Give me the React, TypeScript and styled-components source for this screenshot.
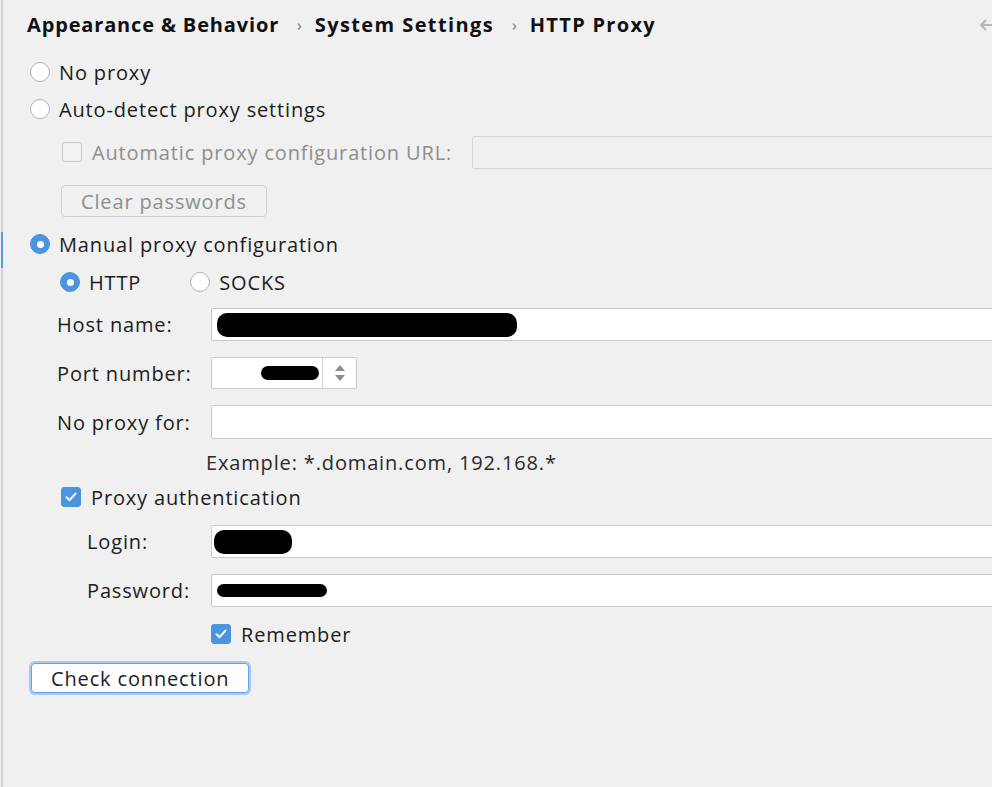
import React from "react";
import styled, { createGlobalStyle } from "styled-components";

const Global = createGlobalStyle`
  html, body { margin: 0; padding: 0; background: #f0f0f0; overflow: hidden; }
  body { font-family: "Open Sans", "Noto Sans", sans-serif; color: #1c1c1c; }
  * { box-sizing: border-box; }
`;

const Page = styled.div`
  display: flex;
  width: 992px;
  height: 787px;
  background: #f0f0f0;
  font-size: 20px;
  letter-spacing: 0.85px;
`;

const Rail = styled.div`
  width: 2px;
  margin-left: 1px;
  background: #d2d2d2;
  display: flex;
  flex-direction: column;
`;

const RailMark = styled.div`
  margin-top: 232px;
  height: 36px;
  background: #5b9be0;
`;

const Content = styled.div`
  flex: 1;
  display: flex;
  flex-direction: column;
  padding-left: 24px;
  min-width: 0;
`;

const Header = styled.div`
  height: 49px;
  display: flex;
  align-items: center;
  justify-content: space-between;
  font-weight: 700;
  letter-spacing: 0.85px;
  color: #111;
`;

const Crumbs = styled.div`
  display: flex;
  align-items: center;
`;

const Crumb = styled.span<{ $ls?: number }>`
  letter-spacing: ${(p) => p.$ls ?? 0.85}px;
`;

const Sep = styled.span`
  color: #777;
  font-weight: 400;
  font-size: 16px;
  margin: 0 12px 0 18px;
`;

const BackArrow = styled.svg`
  margin-right: -6px;
  flex: none;
`;

const Row = styled.div<{ $mt: number; $h: number; $indent?: number }>`
  display: flex;
  align-items: center;
  margin-top: ${(p) => p.$mt}px;
  height: ${(p) => p.$h}px;
  padding-left: ${(p) => p.$indent ?? 0}px;
`;

const Choice = styled.label<{ $disabled?: boolean }>`
  display: inline-flex;
  align-items: center;
  color: ${(p) => (p.$disabled ? "#8e8e8e" : "#1c1c1c")};
  white-space: nowrap;
`;

const RadioDot = styled.span<{ $on?: boolean }>`
  width: 20px;
  height: 20px;
  border-radius: 50%;
  flex: none;
  margin-right: 9px;
  display: inline-flex;
  align-items: center;
  justify-content: center;
  background: ${(p) => (p.$on ? "#4a94e0" : "#ffffff")};
  border: 1px solid ${(p) => (p.$on ? "#4a94e0" : "#b3b3b3")};
  &::after {
    content: "";
    display: ${(p) => (p.$on ? "block" : "none")};
    width: 7px;
    height: 7px;
    border-radius: 50%;
    background: #fff;
  }
`;

const Box = styled.span<{ $on?: boolean; $disabled?: boolean }>`
  width: 20px;
  height: 20px;
  border-radius: 3px;
  flex: none;
  margin-right: 10px;
  display: inline-flex;
  align-items: center;
  justify-content: center;
  background: ${(p) => (p.$on ? "#4a94e0" : p.$disabled ? "#f2f2f2" : "#fff")};
  border: 1px solid ${(p) => (p.$on ? "#4a94e0" : p.$disabled ? "#c6c6c6" : "#b3b3b3")};
`;

const Spacer = styled.span<{ $w: number }>`
  display: inline-block;
  width: ${(p) => p.$w}px;
  flex: none;
`;

const Field = styled.div<{ $disabled?: boolean; $h?: number }>`
  flex: 1;
  height: ${(p) => p.$h ?? 33}px;
  margin-right: -6px;
  display: flex;
  align-items: center;
  padding-left: 5px;
  background: ${(p) => (p.$disabled ? "#f0f0f0" : "#ffffff")};
  border: 1px solid ${(p) => (p.$disabled ? "#d6d6d6" : "#c9c9c9")};
  border-radius: 2px;
`;

const Label = styled.span<{ $w: number }>`
  width: ${(p) => p.$w}px;
  flex: none;
  white-space: nowrap;
`;

const Redact = styled.span<{ $w: number; $h: number; $ml?: number }>`
  display: inline-block;
  width: ${(p) => p.$w}px;
  height: ${(p) => p.$h}px;
  margin-left: ${(p) => p.$ml ?? 0}px;
  background: #000;
  border-radius: ${(p) => Math.min(p.$h / 2, 10)}px;
`;

const Spinner = styled.div`
  width: 146px;
  height: 32px;
  display: flex;
  background: #fff;
  border: 1px solid #c9c9c9;
  border-radius: 2px;
`;

const SpinValue = styled.div`
  flex: 1;
  display: flex;
  align-items: center;
  justify-content: flex-end;
  padding-right: 3px;
  border-right: 1px solid #d4d4d4;
`;

const SpinArrows = styled.div`
  width: 33px;
  display: flex;
  align-items: center;
  justify-content: center;
`;

const Button = styled.button<{ $disabled?: boolean; $focus?: boolean }>`
  font: inherit;
  letter-spacing: inherit;
  font-size: 20px;
  height: ${(p) => (p.$focus ? 30 : 32)}px;
  padding: 0 19px;
  margin-left: ${(p) => (p.$focus ? 2 : 0)}px;
  border-radius: 4px;
  background: ${(p) => (p.$disabled ? "#f0f0f0" : "#ffffff")};
  color: ${(p) => (p.$disabled ? "#8e8e8e" : "#1c1c1c")};
  border: 1px solid ${(p) => (p.$disabled ? "#cfcfcf" : "#6aa5e8")};
  box-shadow: ${(p) => (p.$focus ? "0 0 0 2px #a6cbf2" : "none")};
  display: inline-flex;
  align-items: center;
`;

const Hint = styled.span`
  padding-left: 179px;
  color: #2a2a2a;
`;

const Check = () => (
  <svg width="12" height="10" viewBox="0 0 12 10">
    <path d="M1.5 5.2 L4.6 8.2 L10.5 1.6" fill="none" stroke="#fff" strokeWidth="2" strokeLinecap="round" strokeLinejoin="round" />
  </svg>
);

export default function App() {
  return (
    <>
      <Global />
      <Page>
        <Rail>
          <RailMark />
        </Rail>
        <Content>
          <Header>
            <Crumbs>
              <Crumb>Appearance &amp; Behavior</Crumb>
              <Sep>›</Sep>
              <Crumb $ls={1.4}>System Settings</Crumb>
              <Sep>›</Sep>
              <Crumb $ls={1.3}>HTTP Proxy</Crumb>
            </Crumbs>
            <BackArrow width="20" height="14" viewBox="0 0 20 14">
              <path d="M19 7 H3 M8 2 L3 7 L8 12" fill="none" stroke="#b5b5b5" strokeWidth="2" />
            </BackArrow>
          </Header>

          <Row $mt={5} $h={36} $indent={3}>
            <Choice>
              <RadioDot />
              No proxy
            </Choice>
          </Row>
          <Row $mt={1} $h={36} $indent={3}>
            <Choice>
              <RadioDot />
              Auto-detect proxy settings
            </Choice>
          </Row>
          <Row $mt={7} $h={36} $indent={35}>
            <Choice $disabled>
              <Box $disabled />
              Automatic proxy configuration URL:
            </Choice>
            <Spacer $w={20} />
            <Field $disabled />
          </Row>
          <Row $mt={15} $h={32} $indent={34}>
            <Button $disabled>Clear passwords</Button>
          </Row>
          <Row $mt={9} $h={36} $indent={3}>
            <Choice>
              <RadioDot $on />
              Manual proxy configuration
            </Choice>
          </Row>
          <Row $mt={2} $h={36} $indent={33}>
            <Choice>
              <RadioDot $on />
              HTTP
            </Choice>
            <Spacer $w={49} />
            <Choice>
              <RadioDot />
              SOCKS
            </Choice>
          </Row>

          <Row $mt={8} $h={33} $indent={30}>
            <Label $w={154}>Host name:</Label>
            <Field>
              <Redact $w={300} $h={24} />
            </Field>
          </Row>
          <Row $mt={16} $h={32} $indent={30}>
            <Label $w={154}>Port number:</Label>
            <Spinner>
              <SpinValue>
                <Redact $w={58} $h={14} />
              </SpinValue>
              <SpinArrows>
                <svg width="12" height="22" viewBox="0 0 12 22">
                  <path d="M1 9 L6 3 L11 9 Z M1 13 L6 19 L11 13 Z" fill="#8c8c8c" />
                </svg>
              </SpinArrows>
            </Spinner>
          </Row>
          <Row $mt={16} $h={34} $indent={30}>
            <Label $w={154}>No proxy for:</Label>
            <Field $h={34} />
          </Row>
          <Row $mt={11} $h={24}>
            <Hint>Example: *.domain.com, 192.168.*</Hint>
          </Row>
          <Row $mt={11} $h={24} $indent={34}>
            <Choice>
              <Box $on>
                <Check />
              </Box>
              Proxy authentication
            </Choice>
          </Row>
          <Row $mt={16} $h={33} $indent={60}>
            <Label $w={124}>Login:</Label>
            <Field>
              <Redact $w={78} $h={24} $ml={-3} />
            </Field>
          </Row>
          <Row $mt={16} $h={33} $indent={60}>
            <Label $w={124}>Password:</Label>
            <Field>
              <Redact $w={110} $h={13} />
            </Field>
          </Row>
          <Row $mt={15} $h={24} $indent={184}>
            <Choice>
              <Box $on>
                <Check />
              </Box>
              Remember
            </Choice>
          </Row>
          <Row $mt={15} $h={34} $indent={2}>
            <Button $focus>Check connection</Button>
          </Row>
        </Content>
      </Page>
    </>
  );
}
